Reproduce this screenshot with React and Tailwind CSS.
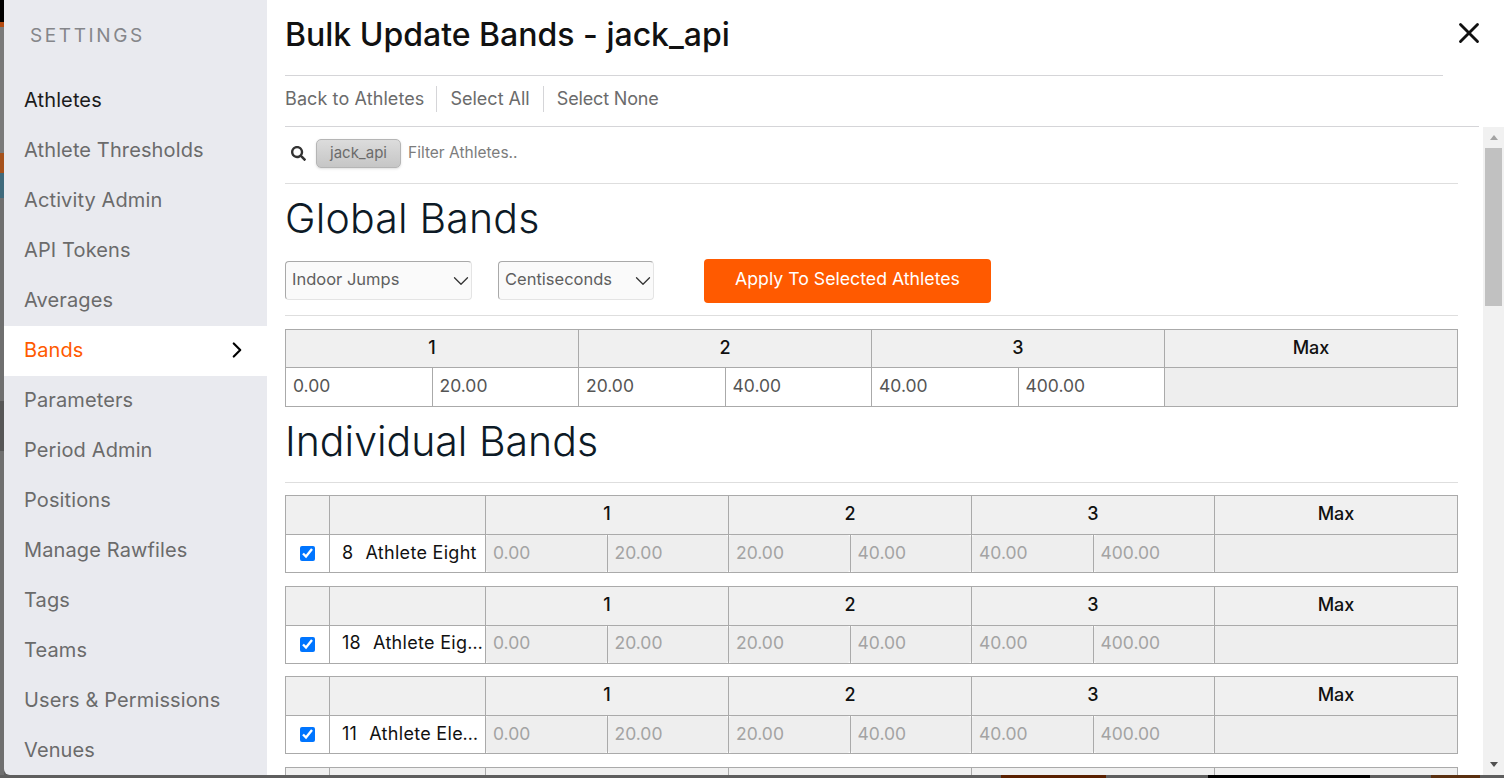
import React from 'react';
import { ChevronDown, ChevronRight, X } from 'lucide-react';
import { FaSearch } from 'react-icons/fa';

const menuItems = [
  'Athletes',
  'Athlete Thresholds',
  'Activity Admin',
  'API Tokens',
  'Averages',
  'Bands',
  'Parameters',
  'Period Admin',
  'Positions',
  'Manage Rawfiles',
  'Tags',
  'Teams',
  'Users & Permissions',
  'Venues',
];

const bandValues = ['0.00', '20.00', '20.00', '40.00', '40.00', '400.00'];

const athletes = [
  { id: 8, name: 'Athlete Eight' },
  { id: 18, name: 'Athlete Eighteen' },
  { id: 11, name: 'Athlete Eleven' },
  { id: 15, name: 'Athlete Fifteen' },
];

const Sidebar = () => (
  <aside className="w-[263px] shrink-0 bg-[#e9eaef] rounded-bl-md overflow-hidden">
    <div className="h-[76px] pl-[26px] pt-[23px] text-[19px] leading-[26px] tracking-[2.6px] text-[#85868a]">SETTINGS</div>
    {menuItems.map((item) => {
      const active = item === 'Bands';
      return (
        <div
          key={item}
          className={`h-[50px] pl-[20px] pr-[17px] pb-[2px] flex items-center justify-between text-[20px] tracking-[0.12px] ${
            active ? 'bg-white text-[#ff5a00]' : item === 'Athletes' ? 'text-[#1c1c1c]' : 'text-[#6b6b6b]'
          }`}
        >
          <span>{item}</span>
          {active && <ChevronRight className="w-[26px] h-[26px] text-black" strokeWidth={2} />}
        </div>
      );
    })}
  </aside>
);

const Select = ({ label, width }) => (
  <div className={`${width} h-[39px] flex items-center justify-between pl-[6px] bg-[#fafafa] border border-[#e4e4e4] border-t-[#a9a9a9] border-l-[#a9a9a9] rounded-[4px] text-[16.5px] text-[#5f5f5f]`}>
    <span className="pb-[3px]">{label}</span>
    <ChevronDown className="w-[26px] h-[26px] -mr-[3px] text-[#333]" strokeWidth={1.2} />
  </div>
);

const BandInput = ({ value, disabled }) => (
  <input
    readOnly
    value={value}
    className={`w-0 min-w-0 flex-1 h-full px-[7px] pb-[3px] text-[17.5px] rounded-[3px] outline-none ${
      disabled ? 'bg-[#eeeeee] text-[#a3a3a3]' : 'bg-white text-[#555]'
    }`}
  />
);

const HeadCell = ({ children, className }) => (
  <div className={`bg-[#f0f0f0] flex items-center justify-center pb-[3px] text-[18px] font-medium text-[#111] border-l border-[#aaa] first:border-l-0 ${className}`}>
    {children}
  </div>
);

const BandCells = ({ disabled }) => (
  <>
    {[0, 1, 2].map((band) => (
      <div key={band} className="flex-1 min-w-0 flex border-l border-[#aaa] first:border-l-0">
        <BandInput value={bandValues[band * 2]} disabled={disabled} />
        <div className="w-px bg-[#aaa]" />
        <BandInput value={bandValues[band * 2 + 1]} disabled={disabled} />
      </div>
    ))}
    <div className="flex-1 min-w-0 border-l border-[#aaa] bg-[#eeeeee]" />
  </>
);

const GlobalTable = () => (
  <div className="border border-[#aaa] mt-[13px]">
    <div className="flex h-[38px] border-b border-[#aaa]">
      {['1', '2', '3', 'Max'].map((h) => (
        <HeadCell key={h} className="flex-1">{h}</HeadCell>
      ))}
    </div>
    <div className="flex h-[38px]">
      <BandCells />
    </div>
  </div>
);

const AthleteTable = ({ athlete }) => (
  <div className="border border-[#aaa] mb-[12.67px]">
    <div className="flex h-[39px] border-b border-[#aaa]">
      <HeadCell className="w-[43px] shrink-0" />
      <HeadCell className="w-[156px] shrink-0" />
      {['1', '2', '3', 'Max'].map((h) => (
        <HeadCell key={h} className="flex-1">{h}</HeadCell>
      ))}
    </div>
    <div className="flex h-[37px]">
      <div className="w-[43px] shrink-0 flex items-center justify-center">
        <input type="checkbox" checked readOnly className="w-[15px] h-[15px]" />
      </div>
      <div className="w-[156px] shrink-0 border-l border-[#aaa] flex items-center gap-[12px] pl-[12px] pb-[3px] text-[18px] tracking-[0.3px] text-[#111] overflow-hidden">
        <span>{athlete.id}</span>
        <span className="truncate">{athlete.name}</span>
      </div>
      <div className="flex-1 flex border-l border-[#aaa] min-w-0">
        <BandCells disabled />
      </div>
    </div>
  </div>
);

const Scrollbar = () => (
  <div className="w-[21px] shrink-0 ml-[4px] bg-[#f1f1f1] flex flex-col items-center">
    <div className="h-[21px] flex items-center justify-center">
      <div className="w-0 h-0 border-x-[4px] border-x-transparent border-b-[5px] border-b-[#a3a3a3]" />
    </div>
    <div className="w-[17px] h-[158px] bg-[#c1c1c1]" />
    <div className="flex-1" />
    <div className="h-[21px] flex items-center justify-center">
      <div className="w-0 h-0 border-x-[4px] border-x-transparent border-t-[5px] border-t-[#505050]" />
    </div>
  </div>
);

export default function App() {
  return (
    <div className="h-screen overflow-hidden flex flex-col bg-[#5e5e5e]" style={{ fontFamily: '"Inter", "Noto Sans", sans-serif' }}>
      <div className="h-[775px] flex">
        <div className="w-1 shrink-0 flex flex-col">
          <div className="h-[22px] bg-black" />
          <div className="h-[5px] bg-[#b34a10]" />
          <div className="h-[126px] bg-[#7a7a7a]" />
          <div className="h-[20px] bg-[#a6521c]" />
          <div className="h-[25px] bg-[#3f6a7c]" />
          <div className="h-[203px] bg-[#6f6f6f]" />
          <div className="h-[50px] bg-[#565656]" />
          <div className="flex-1 bg-[#6f6f6f]" />
        </div>
        <Sidebar />
        <main className="flex-1 min-w-0 bg-white flex flex-col">
          <div className="h-[76px] shrink-0 pl-[18px] pr-[61px] relative">
            <div className="h-[76px] border-b border-[#d5d5d8] flex items-center pb-[6px]">
              <h1 className="text-[32px] font-medium text-[#111]">Bulk Update Bands - jack_api</h1>
            </div>
            <X className="absolute right-[18px] top-[16px] w-[34px] h-[34px] text-[#111]" strokeWidth={2} />
          </div>
          <div className="h-[51px] shrink-0 ml-[18px] mr-[25px] border-b border-[#d5d5d8] flex items-center pb-[4px] text-[18px] text-[#6b6b6b]">
            <span className="pr-[12px] border-r border-[#d5d5d8] leading-[26px] tracking-[0.1px]">Back to Athletes</span>
            <span className="px-[13px] border-r border-[#d5d5d8] leading-[26px]">Select All</span>
            <span className="pl-[13px] leading-[26px] tracking-[-0.15px]">Select None</span>
          </div>
          <div className="flex-1 min-h-0 flex">
            <div className="flex-1 min-w-0 overflow-hidden pl-[18px] pr-[21px]">
              <div className="h-[57px] border-b border-[#dedede] flex items-center pb-[4px]">
                <FaSearch className="ml-[6px] w-[15px] h-[15px] text-[#333]" />
                <span className="ml-[10px] h-[29px] w-[85px] flex items-center justify-center rounded-[5px] border border-[#b5b5b5] bg-gradient-to-b from-[#dcdcdc] to-[#c6c6c6] text-[15px] text-[#6b6b6b] shadow-sm">jack_api</span>
                <span className="ml-[7px] text-[15.5px] text-[#7c7c7c]">Filter Athletes..</span>
              </div>
              <h2 className="mt-[9px] text-[41px] leading-[50px] font-light tracking-[0.2px] text-[#0d1a26]">Global Bands</h2>
              <div className="mt-[16px] h-[57px] border-b border-[#dedede] flex items-start">
                <div className="mt-[2px]"><Select label="Indoor Jumps" width="w-[187px]" /></div>
                <div className="mt-[2px] ml-[26px]"><Select label="Centiseconds" width="w-[156px]" /></div>
                <button className="ml-[50px] w-[287px] h-[44px] pb-[4px] bg-[#ff5a00] text-white text-[17.7px] rounded-[4px]">Apply To Selected Athletes</button>
              </div>
              <GlobalTable />
              <h2 className="mt-[9px] text-[41px] leading-[50px] font-light text-[#0d1a26]">Individual Bands</h2>
              <div className="mt-[16px] mb-[12px] border-b border-[#dedede]" />
              {athletes.map((a) => (
                <AthleteTable key={a.id} athlete={a} />
              ))}
            </div>
            <Scrollbar />
          </div>
        </main>
      </div>
      <div className="h-[3px] flex">
        <div className="w-[1001px]" />
        <div className="w-[105px] bg-[#5a2000]" />
        <div className="w-[102px]" />
        <div className="w-[162px] bg-black" />
        <div className="w-[61px]" />
        <div className="w-[49px] bg-[#5a3010]" />
      </div>
    </div>
  );
}
